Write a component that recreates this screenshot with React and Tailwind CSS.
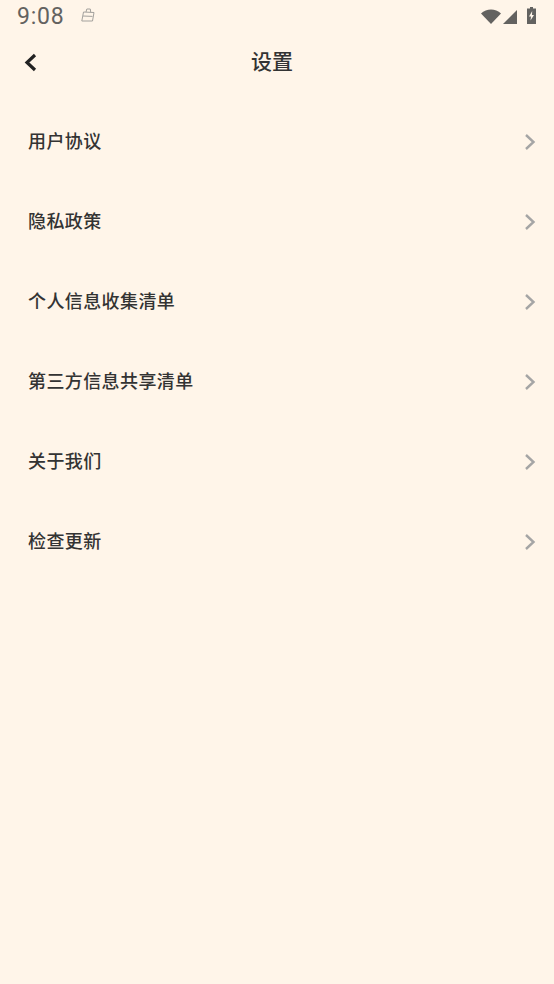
import React from 'react'

const items = ['用户协议', '隐私政策', '个人信息收集清单', '第三方信息共享清单', '关于我们', '检查更新']

const cjk = { fontFamily: '"Noto Sans CJK SC", "Noto Sans", sans-serif' }

const StatusBar = () => (
  <div className="h-[32px] pl-[17px] pr-[18px] flex items-center text-[#636260]">
    <span className="text-[23px] leading-none tracking-[0.8px] font-normal" style={{ fontFamily: 'Roboto, sans-serif' }}>9:08</span>
    <svg className="ml-[16px] mb-[3px]" width="14" height="14" viewBox="0 0 14 14" fill="none" stroke="#a3a19d" strokeWidth="1">
      <path d="M2.500 4l10.500 .5-1.500 8.500H.8z" />
      <path d="M5 4l.8-3h3.500l.4 3.300M2 8l9.500 .4" />
    </svg>
    <div className="ml-auto flex items-center">
      <svg width="20" height="15" viewBox="0 0 20 15"><path d="M0 4.500C5.500 -0.800 14.500 -0.800 20 4.500L10 15z" fill="#636260" /></svg>
      <svg className="ml-[2px] mt-[1px]" width="14" height="14" viewBox="0 0 14 14"><path d="M14 0v14H0z" fill="#636260" /></svg>
      <svg className="ml-[10px] mb-[1px]" width="9" height="17" viewBox="0 0 9 17">
        <path d="M3 0h3v1.500h3V17H0V1.500h3z" fill="#636260" />
        <path d="M5.200 4L2 9.500h2l-.5 4L7 8H5z" fill="#fff5e9" />
      </svg>
    </div>
  </div>
)

export default function App() {
  return (
    <div className="w-[554px] h-[984px] bg-[#fff5e9] overflow-hidden" style={cjk}>
      <StatusBar />
      <div className="relative h-[60px] flex items-center justify-center pr-[10px]">
        <svg className="absolute left-[24px] top-[21px]" width="13" height="19" viewBox="0 0 13 19" fill="none" stroke="#222222" strokeWidth="3.200">
          <path d="M11 2L3 9.500l8 7.500" />
        </svg>
        <h1 className="text-[21px] font-medium text-[#333] leading-none mb-[3px]">设置</h1>
      </div>
      <div className="mt-[10px]">
        {items.map((name) => (
          <div key={name} className="h-[80px] pl-[28px] pr-[18px] flex items-center justify-between">
            <span className="text-[18px] leading-none mb-[5px] tracking-[0.4px] font-medium text-[#333]">{name}</span>
            <svg width="12" height="18" viewBox="0 0 12 18" fill="none" stroke="#a5a5a5" strokeWidth="2.400">
              <path d="M2 2l7.500 7L2 16" />
            </svg>
          </div>
        ))}
      </div>
    </div>
  )
}
